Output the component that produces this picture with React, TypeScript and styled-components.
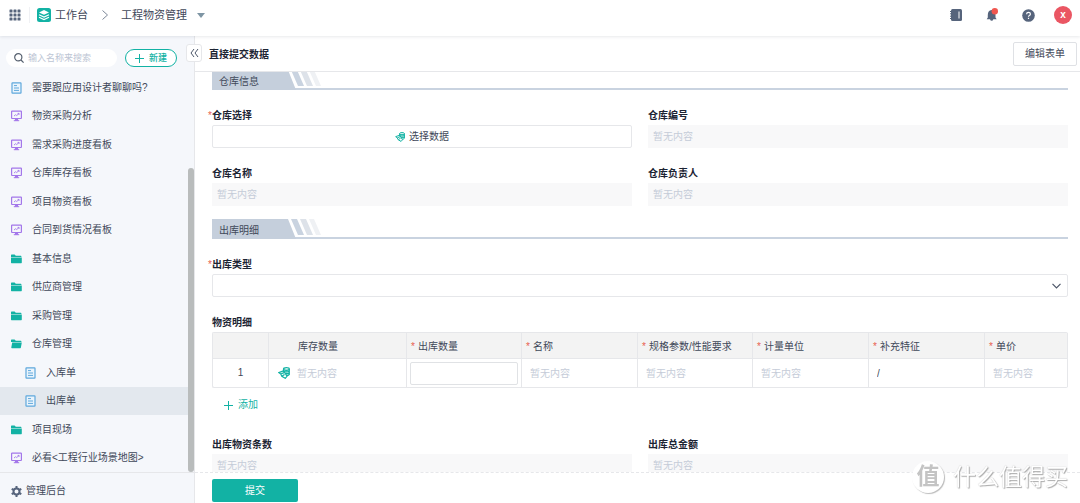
import React from "react";
import styled, { createGlobalStyle, css } from "styled-components";

const teal = "#12b2a4";
const ink = "#3f4859";
const faint = "#c5ccd8";
const line = "#e6e7ea";

const Global = createGlobalStyle`
  *, *::before, *::after { box-sizing: border-box; }
  body {
    margin: 0;
    background: #fff;
    color: ${ink};
    font: 10px/14px "Liberation Sans", "Noto Sans CJK SC", sans-serif;
  }
  button, input, select { font: inherit; color: inherit; }
  button { cursor: pointer; white-space: nowrap; }
  a { color: inherit; text-decoration: none; }
  svg { display: block; flex: none; }
`;

const Shell = styled.div`
  display: flex;
  flex-direction: column;
  height: 100vh;
  overflow: hidden;
`;

const TopBar = styled.header`
  flex: none;
  display: flex;
  align-items: center;
  justify-content: space-between;
  height: 36px;
  padding: 0 8px 6px;
  position: relative;
  z-index: 2;
  background: #fff;
  box-shadow: 0 1px 3px rgba(30, 40, 60, 0.1);
`;

const Crumbs = styled.nav`
  display: flex;
  align-items: center;
  font-size: 11px;
  line-height: 16px;
`;

const AppLink = styled.a`
  display: flex;
  align-items: center;
  gap: 4px;
  margin-left: 7px;
  padding-left: 7px;
  border-left: 1px solid #f0f1f4;
`;

const CrumbButton = styled.button`
  display: flex;
  align-items: center;
  gap: 10px;
  padding: 0;
  border: 0;
  background: none;
`;

const ChevronSlot = styled.span`
  padding: 0 12px 0 13px;
`;

const Tools = styled.div`
  display: flex;
  align-items: center;
  gap: 22px;
`;

const IconButton = styled.button`
  display: flex;
  align-items: center;
  justify-content: center;
  width: 14px;
  height: 14px;
  padding: 0;
  border: 0;
  background: none;
`;

const Avatar = styled.button`
  width: 18px;
  height: 18px;
  margin-left: -3px;
  padding: 0;
  border: 0;
  border-radius: 50%;
  background: #ea5663;
  color: #fff;
  font-weight: 700;
  line-height: 18px;
`;

const Body = styled.div`
  flex: 1;
  min-height: 0;
  display: flex;
`;

const Sidebar = styled.aside`
  flex: none;
  position: relative;
  display: flex;
  flex-direction: column;
  width: 195px;
  border-right: 1px solid ${line};
  background: #f5f7fb;
`;

const SideTools = styled.div`
  flex: none;
  display: flex;
  align-items: center;
  gap: 8px;
  height: 37px;
  padding: 8px 0 1px 6px;
  font-size: 9px;
`;

const Search = styled.label`
  display: flex;
  align-items: center;
  gap: 4px;
  width: 111px;
  height: 18px;
  padding-left: 8px;
  border-radius: 9px;
  background: #fff;
`;

const SearchInput = styled.input`
  width: 84px;
  padding: 0;
  border: 0;
  outline: 0;
  background: none;
  &::placeholder { color: #bcc5d4; opacity: 1; }
`;

const NewButton = styled.button`
  display: flex;
  align-items: center;
  justify-content: center;
  gap: 5px;
  width: 52px;
  height: 18px;
  padding: 0;
  border: 1px solid ${teal};
  border-radius: 9px;
  background: #fff;
  color: ${teal};
  font-weight: 500;
`;

const Collapse = styled.button`
  position: absolute;
  top: 8px;
  right: -8px;
  z-index: 1;
  display: flex;
  align-items: center;
  justify-content: center;
  width: 16px;
  height: 18px;
  padding: 0;
  border: 1px solid ${line};
  border-radius: 3px;
  background: #fff;
`;

const Menu = styled.ul`
  flex: 1;
  min-height: 0;
  display: grid;
  grid-auto-rows: 1fr;
  margin: 0;
  padding: 0;
  list-style: none;
`;

const MenuLink = styled.a<{ $nested?: boolean; $active?: boolean }>`
  display: flex;
  align-items: center;
  gap: 10px;
  height: 100%;
  padding: 1px 0 0 ${(p) => (p.$nested ? 25 : 11)}px;
  white-space: nowrap;
  ${(p) => p.$active && css`background: #e3e8ee;`}
`;

const ScrollThumb = styled.div`
  position: absolute;
  top: 132px;
  right: 0;
  bottom: 31px;
  width: 6px;
  border-radius: 3px;
  background: #b9bcbc;
`;

const AdminLink = styled.a`
  flex: none;
  display: flex;
  align-items: center;
  gap: 4px;
  height: 31px;
  padding: 6px 0 0 11px;
  border-top: 1px solid ${line};
`;

const Main = styled.main`
  flex: 1;
  min-width: 0;
  display: flex;
  flex-direction: column;
`;

const TitleBar = styled.div`
  flex: none;
  display: flex;
  align-items: center;
  justify-content: space-between;
  height: 36px;
  padding: 0 3px 0 14px;
  border-bottom: 1px solid ${line};
`;

const Title = styled.h1`
  margin: 0;
  padding-top: 2px;
  color: #1c2433;
  font-size: 10px;
`;

const EditButton = styled.button`
  height: 24px;
  padding: 0 11px;
  border: 1px solid #dfe1e5;
  border-radius: 2px;
  background: #fff;
`;

const Form = styled.form`
  flex: 1;
  min-height: 0;
  display: flex;
  flex-direction: column;
`;

const Fields = styled.div`
  flex: 1;
  min-height: 0;
  overflow: hidden;
  padding: 0 12px 0 17px;
`;

const Banner = styled.div<{ $first?: boolean }>`
  display: flex;
  height: 20px;
  margin-top: ${(p) => (p.$first ? -2 : 0)}px;
  margin-bottom: 13px;
  border-bottom: 2px solid #c9d3e0;
`;

const BannerTitle = styled.h2`
  width: 84px;
  height: 20px;
  margin: 0;
  padding-left: 7px;
  background: #c5cfdc;
  clip-path: polygon(0 0, 76px 0, 100% 100%, 0 100%);
  color: ${ink};
  font-size: 10px;
  font-weight: 400;
  line-height: 24px;
`;

const Stripes = styled.svg`
  margin-left: -6px;
`;

const Pair = styled.div`
  display: grid;
  grid-template-columns: 1fr 1fr;
  gap: 16px;
`;

const Field = styled.div<{ $tall?: boolean }>`
  display: flex;
  flex-direction: column;
  gap: 2px;
  margin-bottom: ${(p) => (p.$tall ? 20 : 13)}px;
  padding-top: 6px;
`;

const Label = styled.label`
  position: relative;
  color: #1c2433;
  font-weight: 700;
`;

const Star = styled.span<{ $hang?: boolean }>`
  color: #e8604f;
  font-weight: 400;
  ${(p) => p.$hang && css`position: absolute; left: -4px;`}
`;

const ReadOnly = styled.input`
  width: 100%;
  height: 23px;
  padding: 0 5px;
  border: 0;
  outline: 0;
  background: #f8f8f9;
  &::placeholder { color: ${faint}; opacity: 1; }
`;

const PickButton = styled.button`
  display: flex;
  align-items: center;
  justify-content: center;
  gap: 4px;
  height: 23px;
  border: 1px solid ${line};
  border-radius: 2px;
  background: #fff;
`;

const SelectWrap = styled.div`
  display: grid;
  align-items: center;
  > * { grid-area: 1 / 1; }
  > svg { justify-self: end; margin-right: 7px; pointer-events: none; }
`;

const Select = styled.select`
  appearance: none;
  width: 100%;
  height: 23px;
  padding: 0 6px;
  border: 1px solid ${line};
  border-radius: 2px;
  background: #fff;
`;

const Table = styled.table`
  width: 100%;
  table-layout: fixed;
  border-collapse: separate;
  border-spacing: 0;
  border: 1px solid ${line};
  border-right: 0;
  border-radius: 2px;
`;

const Th = styled.th<{ $indent?: boolean }>`
  height: 26px;
  padding: 2px 0 0 ${(p) => (p.$indent ? 29 : 4)}px;
  border-right: 1px solid ${line};
  border-bottom: 1px solid ${line};
  background: #f3f3f3;
  font-weight: 400;
  text-align: left;
  white-space: nowrap;
  ${Star} { margin-right: 3px; }
`;

const Td = styled.td<{ $center?: boolean }>`
  height: 28px;
  padding: 0 3px;
  border-right: 1px solid ${line};
  text-align: ${(p) => (p.$center ? "center" : "left")};
`;

const CellInput = styled.input<{ $boxed?: boolean }>`
  display: block;
  width: 100%;
  height: 23px;
  padding: 0 4px;
  border: 1px solid ${(p) => (p.$boxed ? "#e0e2e5" : "transparent")};
  border-radius: 2px;
  outline: 0;
  background: none;
  &::placeholder { color: ${faint}; opacity: 1; }
`;

const StockCell = styled.div`
  display: flex;
  align-items: center;
  gap: 2px;
  padding-left: 6px;
`;

const AddButton = styled.button`
  align-self: flex-start;
  display: flex;
  align-items: center;
  gap: 5px;
  height: 14px;
  margin: 8px 0 0 12px;
  padding: 0;
  border: 0;
  background: none;
  color: ${teal};
`;

const FormFooter = styled.div`
  flex: none;
  height: 31px;
  padding: 6px 17px 0;
  border-top: 1px dashed ${line};
`;

const Submit = styled.button`
  width: 86px;
  height: 23px;
  border: 0;
  border-radius: 2px;
  background: ${teal};
  color: #fff;
`;

const Watermark = styled.div`
  position: fixed;
  right: 12px;
  bottom: 10px;
  z-index: 5;
  display: flex;
  align-items: center;
  gap: 9px;
  color: #fff;
  font-size: 23px;
  line-height: 32px;
  text-shadow: 1px 1px 1px #aaa, 0 0 1px #bbb;
  pointer-events: none;
`;

const Seal = styled.span`
  width: 32px;
  height: 32px;
  border-radius: 50%;
  background: #fff;
  box-shadow: 1px 1px 1px #bbb;
  color: #c4c4c4;
  font-weight: 700;
  line-height: 30px;
  text-align: center;
  text-shadow: none;
`;

const GridIcon = () => (
  <svg width="12" height="12" viewBox="0 0 12 12" fill="#56647c">
    {[0, 4, 8].map((y) => [0, 4, 8].map((x) => <rect key={`${x}-${y}`} x={x + 0.5} y={y + 0.5} width="3" height="3" rx=".6" />))}
  </svg>
);

const LayersIcon = () => (
  <svg width="14" height="14" viewBox="0 0 14 14">
    <rect width="14" height="14" rx="2.5" fill={teal} />
    <path d="M7 2l5 2.4-5 2.4-5-2.4z" fill="#fff" />
    <path d="M2 6.7l5 2.4 5-2.4M2 9.2l5 2.4 5-2.4" fill="none" stroke="#fff" strokeWidth="1.1" />
  </svg>
);

const PageIcon = () => (
  <svg width="11" height="12" viewBox="0 0 11 12" fill="none" stroke="#5fa8dc">
    <rect x="1" y=".8" width="9" height="10.4" rx=".5" fill="#eaf4fc" strokeWidth="1.2" />
    <path d="M3 3.6h3M3 6h5M3 8.4h5" />
  </svg>
);

const BoardIcon = () => (
  <svg width="11" height="12" viewBox="0 0 11 12" fill="none" stroke="#a377ea">
    <rect x=".6" y="1.1" width="9.8" height="7.4" rx=".5" strokeWidth="1.2" />
    <path d="M3 6l1.7-1.3 1 .8L8 3.6M6.6 3.4h1.5v1.4" strokeWidth=".9" />
    <path d="M4 9h3l.3 1.8H3.7z" fill="#a377ea" stroke="none" />
    <path d="M2.8 10.7h5.4" />
  </svg>
);

const FolderIcon = ({ open }: { open?: boolean }) => (
  <svg width="11" height="12" viewBox="0 0 11 12" fill={teal}>
    <path d="M0 2.2q0-.6.6-.6h3l1.2 1.2h5q.6 0 .6.6V4H0z" />
    {open ? <path d="M1.2 4.6h9.6L9.9 9.6q-.1.6-.7.6H.9q-.6 0-.6-.6z" /> : <path d="M0 4.5h10.8v5.1q0 .6-.6.6H.6q-.6 0-.6-.6z" />}
  </svg>
);

const PlusIcon = () => (
  <svg width="9" height="9" viewBox="0 0 9 9" stroke={teal}>
    <path d="M4.5 0v9M0 4.5h9" />
  </svg>
);

const DataIcon = ({ size }: { size: number }) => (
  <svg width={size} height={size} viewBox="0 0 12 12" fill="none" stroke={teal} strokeWidth="1.2">
    <path d="M5.6 2.2v5.500q2.700 1.800 5.600 0V2.200z" fill="#c9efeb" stroke="none" />
    <ellipse cx="8.4" cy="2" rx="2.9" ry="1.3" />
    <path d="M5.5 2v2.500M11.300 2v5.500q-.5 1-2.300 1.100M5.600 4.300q2.700 1.300 5.700 0M7.500 6.600q2 .2 3.800-.5" />
    <path d="M5.4 3.900L.8 5.600l2 1.500 1 2.200 3.500 2L9 9.300 7.400 6.500zM2.800 7L6 5.600M4.200 9l2.300-1.400" />
  </svg>
);

const menu: { text: string; kind: "page" | "board" | "folder" | "open"; nested?: boolean; active?: boolean }[] = [
  { text: "需要跟应用设计者聊聊吗?", kind: "page" },
  { text: "物资采购分析", kind: "board" },
  { text: "需求采购进度看板", kind: "board" },
  { text: "仓库库存看板", kind: "board" },
  { text: "项目物资看板", kind: "board" },
  { text: "合同到货情况看板", kind: "board" },
  { text: "基本信息", kind: "folder" },
  { text: "供应商管理", kind: "folder" },
  { text: "采购管理", kind: "folder" },
  { text: "仓库管理", kind: "open" },
  { text: "入库单", kind: "page", nested: true },
  { text: "出库单", kind: "page", nested: true, active: true },
  { text: "项目现场", kind: "folder" },
  { text: "必看<工程行业场景地图>", kind: "board" },
];

const columns: { name: string; width?: number; boxed?: boolean; value?: string }[] = [
  { name: "出库数量", width: 115, boxed: true },
  { name: "名称", width: 116 },
  { name: "规格参数/性能要求", width: 115 },
  { name: "计量单位", width: 116 },
  { name: "补充特征", width: 116, value: "/" },
  { name: "单价" },
];

const SectionBanner = ({ title, first }: { title: string; first?: boolean }) => (
  <Banner $first={first}>
    <BannerTitle>{title}</BannerTitle>
    <Stripes width="32" height="16" viewBox="0 0 32 16">
      <path d="M1 0h6l7 16H8z" fill="#c9d3e0" />
      <path d="M10 0h6l7 16h-6z" fill="#dde2e9" />
      <path d="M19 0h5l7 16h-5z" fill="#eff1f4" />
    </Stripes>
  </Banner>
);

const EmptyField = ({ id, label }: { id: string; label: string }) => (
  <Field>
    <Label htmlFor={id}>{label}</Label>
    <ReadOnly id={id} placeholder="暂无内容" readOnly />
  </Field>
);

export default function App() {
  return (
    <>
      <Global />
      <Shell>
        <TopBar>
          <Crumbs>
            <IconButton aria-label="应用"><GridIcon /></IconButton>
            <AppLink href="#"><LayersIcon />工作台</AppLink>
            <ChevronSlot>
              <svg width="8" height="10" viewBox="0 0 8 10" fill="none" stroke="#7d8898"><path d="M1.5.5l5 4.5-5 4.5" /></svg>
            </ChevronSlot>
            <CrumbButton>
              工程物资管理
              <svg width="8" height="5" viewBox="0 0 8 5" fill="#7e95a4"><path d="M0 0h8L4 5z" /></svg>
            </CrumbButton>
          </Crumbs>
          <Tools>
            <IconButton aria-label="通讯录">
              <svg width="12" height="12" viewBox="0 0 12 12">
                <rect x="1" width="11" height="12" rx="1.5" fill="#56647c" />
                <path d="M0 2.5h2M0 4.8h2M0 7.2h2M0 9.5h2" stroke="#56647c" />
                <path d="M9 2.5v7" stroke="#fff" />
              </svg>
            </IconButton>
            <IconButton aria-label="消息">
              <svg width="14" height="14" viewBox="0 0 14 14">
                <path d="M6.5 2Q10.5 2.5 10.5 7v2.5l1.2 1.8H8.3q-.3 1.5-1.6 1.5T5 11.300H1.700L2.800 9.500V7Q2.800 2.500 6.500 2z" fill="#56647c" />
                <circle cx="9.8" cy="3.3" r="3.2" fill="#f0564f" />
              </svg>
            </IconButton>
            <IconButton aria-label="帮助">
              <svg width="13" height="13" viewBox="0 0 13 13" fill="none">
                <circle cx="6.5" cy="6.5" r="6.3" fill="#56647c" />
                <path d="M4.600 5.200q0-1.800 1.900-1.800t1.900 1.600q0 1-1 1.500-.9.400-.9 1.200M6.500 8.700v1.300" stroke="#fff" strokeWidth="1.2" />
              </svg>
            </IconButton>
            <Avatar>x</Avatar>
          </Tools>
        </TopBar>
        <Body>
          <Sidebar>
            <SideTools>
              <Search>
                <svg width="10" height="10" viewBox="0 0 10 10" fill="none" stroke="#56606f" strokeWidth="1.2">
                  <circle cx="4.3" cy="4.3" r="3.6" /><path d="M7 7l2.6 2.6" />
                </svg>
                <SearchInput aria-label="搜索" placeholder="输入名称来搜索" />
              </Search>
              <NewButton><PlusIcon />新建</NewButton>
            </SideTools>
            <Collapse aria-label="收起">
              <svg width="9" height="8" viewBox="0 0 9 8" fill="none" stroke="#4c5668"><path d="M4 0L1 4l3 4M8 0L5 4l3 4" /></svg>
            </Collapse>
            <Menu>
              {menu.map((m) => (
                <li key={m.text}>
                  <MenuLink href="#" $nested={m.nested} $active={m.active}>
                    {m.kind === "page" ? <PageIcon /> : m.kind === "board" ? <BoardIcon /> : <FolderIcon open={m.kind === "open"} />}
                    {m.text}
                  </MenuLink>
                </li>
              ))}
            </Menu>
            <ScrollThumb />
            <AdminLink href="#">
              <svg width="11" height="11" viewBox="0 0 11 11" fill="none" stroke="#56647c">
                <circle cx="5.5" cy="5.5" r="3" strokeWidth="2" />
                <path d="M5.500 0v2M5.500 9v2M.7 2.800l1.800 1M8.500 7.200l1.800 1M.7 8.200l1.800-1M8.500 3.800l1.800-1" strokeWidth="2" />
              </svg>
              管理后台
            </AdminLink>
          </Sidebar>
          <Main>
            <TitleBar>
              <Title>直接提交数据</Title>
              <EditButton>编辑表单</EditButton>
            </TitleBar>
            <Form onSubmit={(e) => e.preventDefault()}>
              <Fields>
                <SectionBanner title="仓库信息" first />
                <Pair>
                  <Field>
                    <Label htmlFor="pick"><Star $hang>*</Star>仓库选择</Label>
                    <PickButton id="pick" type="button"><DataIcon size={10} />选择数据</PickButton>
                  </Field>
                  <EmptyField id="code" label="仓库编号" />
                </Pair>
                <Pair>
                  <EmptyField id="name" label="仓库名称" />
                  <EmptyField id="owner" label="仓库负责人" />
                </Pair>
                <SectionBanner title="出库明细" />
                <Field>
                  <Label htmlFor="type"><Star $hang>*</Star>出库类型</Label>
                  <SelectWrap>
                    <Select id="type" defaultValue=""><option value="" /></Select>
                    <svg width="9" height="6" viewBox="0 0 9 6" fill="none" stroke="#4c5668" strokeWidth="1.2"><path d="M.5.8l4 4 4-4" /></svg>
                  </SelectWrap>
                </Field>
                <Field $tall>
                  <Label as="div" id="detail">物资明细</Label>
                  <Table aria-labelledby="detail">
                    <colgroup>
                      <col width={56} />
                      <col width={138} />
                      {columns.map((c) => <col key={c.name} width={c.width} />)}
                    </colgroup>
                    <thead>
                      <tr>
                        <Th />
                        <Th $indent>库存数量</Th>
                        {columns.map((c) => <Th key={c.name}><Star>*</Star>{c.name}</Th>)}
                      </tr>
                    </thead>
                    <tbody>
                      <tr>
                        <Td $center>1</Td>
                        <Td>
                          <StockCell>
                            <DataIcon size={12} />
                            <CellInput aria-label="库存数量" placeholder="暂无内容" readOnly />
                          </StockCell>
                        </Td>
                        {columns.map((c) => (
                          <Td key={c.name}>
                            <CellInput
                              aria-label={c.name}
                              $boxed={c.boxed}
                              defaultValue={c.value}
                              placeholder={c.boxed ? undefined : "暂无内容"}
                            />
                          </Td>
                        ))}
                      </tr>
                    </tbody>
                  </Table>
                  <AddButton type="button"><PlusIcon />添加</AddButton>
                </Field>
                <Pair>
                  <EmptyField id="count" label="出库物资条数" />
                  <EmptyField id="total" label="出库总金额" />
                </Pair>
              </Fields>
              <FormFooter><Submit type="submit">提交</Submit></FormFooter>
            </Form>
          </Main>
        </Body>
      </Shell>
      <Watermark><Seal>值</Seal>什么值得买</Watermark>
    </>
  );
}
